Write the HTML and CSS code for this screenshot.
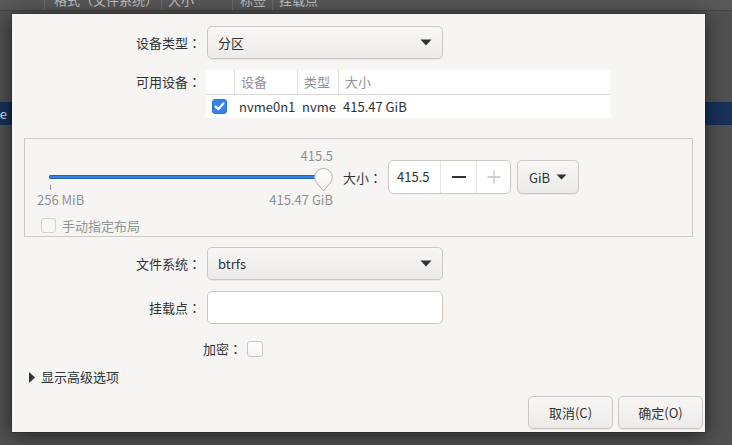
FILE: index.html
```html
<!DOCTYPE html>
<html lang="zh-CN">
<head>
<meta charset="utf-8">
<title>分区</title>
<link rel="stylesheet" href="styles.css">
</head>
<body>
<div class="bg">
  <div class="bg-header">
    <span class="hcol c1"></span>
    <span class="hcol c2">格式（文件系统）</span>
    <span class="hcol c3">大小</span>
    <span class="hcol c4">标签</span>
    <span class="hcol c5">挂载点</span>
  </div>
  <div class="bg-row"><span class="bg-row-text">none</span></div>
</div>

<div class="dialog">
  <div class="form">
    <div class="label">设备类型<span class="colon" lang="zh-TW">：</span></div>
    <div class="combo">
      <span>分区</span>
      <svg class="arrow" width="12" height="7" viewBox="0 0 12 7"><path d="M0.5 0.5 H11.5 L6 6.5 Z" fill="#2e3436"/></svg>
    </div>

    <div class="label label-top">可用设备<span class="colon" lang="zh-TW">：</span></div>
    <div class="devtable">
      <div class="dt-head">
        <div class="dt-c c-chk"></div>
        <div class="dt-c">设备</div>
        <div class="dt-c">类型</div>
        <div class="dt-c">大小</div>
      </div>
      <div class="dt-row">
        <div class="dt-c c-chk">
          <span class="chk-on">
            <svg width="15" height="15" viewBox="0 0 15 15"><path d="M3.6 7.6 L6.3 10.2 L11.4 4.6" fill="none" stroke="#fff" stroke-width="2.2" stroke-linecap="round" stroke-linejoin="round"/></svg>
          </span>
        </div>
        <div class="dt-c">nvme0n1</div>
        <div class="dt-c">nvme</div>
        <div class="dt-c">415.47 GiB</div>
      </div>
    </div>
  </div>

  <div class="frame">
    <div class="frame-top">
      <div class="scale">
        <div class="scale-value">415.5</div>
        <div class="trough">
          <div class="thumb">
            <svg width="19" height="25" viewBox="0 0 19 25">
              <defs>
                <linearGradient id="tg" x1="0" y1="0" x2="0" y2="1">
                  <stop offset="0" stop-color="#ffffff"/>
                  <stop offset="1" stop-color="#f1efed"/>
                </linearGradient>
              </defs>
              <path d="M9.5 24 L3 16.2 A8.8 8.8 0 1 1 16 16.2 Z" fill="url(#tg)" stroke="#b9b2ab" stroke-width="1" stroke-linejoin="round"/>
            </svg>
          </div>
        </div>
        <div class="tick"></div>
        <div class="marks"><span>256 MiB</span><span>415.47 GiB</span></div>
      </div>
      <div class="sizebox">
        <span class="size-label">大小<span class="colon" lang="zh-TW">：</span></span>
        <div class="spin">
          <span class="spin-val">415.5</span>
          <span class="spin-btn">
            <svg width="16" height="16" viewBox="0 0 16 16"><rect x="1" y="7" width="14" height="2" fill="#2e3436"/></svg>
          </span>
          <span class="spin-btn">
            <svg width="16" height="16" viewBox="0 0 16 16"><path d="M8 1.5 V14.5 M1.5 8 H14.5" stroke="#c5c2be" stroke-width="1.3" fill="none"/></svg>
          </span>
        </div>
        <div class="unit-btn">
          <span>GiB</span>
          <svg width="11" height="6" viewBox="0 0 11 6"><path d="M0.5 0.5 H10.5 L5.5 5.5 Z" fill="#2e3436"/></svg>
        </div>
      </div>
    </div>
    <div class="manual">
      <span class="chk-off dis"></span>
      <span>手动指定布局</span>
    </div>
  </div>

  <div class="form form2">
    <div class="label">文件系统<span class="colon" lang="zh-TW">：</span></div>
    <div class="combo">
      <span>btrfs</span>
      <svg class="arrow" width="12" height="7" viewBox="0 0 12 7"><path d="M0.5 0.5 H11.5 L6 6.5 Z" fill="#2e3436"/></svg>
    </div>
    <div class="label">挂载点<span class="colon" lang="zh-TW">：</span></div>
    <div class="entry"></div>
  </div>

  <div class="encrypt">
    <span>加密<span class="colon" lang="zh-TW">：</span></span>
    <span class="chk-off"></span>
  </div>

  <div class="expander">
    <svg width="6" height="11" viewBox="0 0 6 11"><path d="M0 0 L6 5.5 L0 11 Z" fill="#2e3436"/></svg>
    <span>显示高级选项</span>
  </div>

  <div class="actions">
    <button class="btn">取消(C)</button>
    <button class="btn">确定(O)</button>
  </div>
</div>
</body>
</html>
```

FILE: styles.css
```css
* {
  box-sizing: border-box;
}

html, body {
  margin: 0;
  padding: 0;
}

body {
  width: 732px;
  height: 445px;
  overflow: hidden;
  position: relative;
  background: #515151;
  font-family: "Noto Sans CJK SC", "Noto Sans", sans-serif;
  font-size: 13px;
  color: #2e3436;
}

.colon {
  font-family: "Noto Sans CJK TC", "Noto Sans CJK SC", sans-serif;
}

/* background window */
.bg-header {
  height: 11px;
  background: #585858;
  border-bottom: 1px solid #454545;
  display: flex;
  overflow: hidden;
  color: #c2c2c2;
}

.hcol {
  line-height: 16px;
  margin-top: -8px;
  padding-left: 9px;
  border-left: 1px solid #6c6c6c;
  white-space: nowrap;
}

.c1 { width: 44px; border-left: none; }
.c2 { width: 117px; }
.c3 { width: 71px; padding-left: 6px; }
.c4 { width: 40px; padding-left: 7px; }
.c5 { flex: 1; padding-left: 6px; }

.bg-row {
  margin-top: 91px;
  height: 23px;
  background: #173158;
  color: #dfe4ea;
  line-height: 23px;
  overflow: hidden;
}

.bg-row-text {
  display: inline-block;
  margin-left: -24px;
}

/* dialog */
.dialog {
  position: absolute;
  left: 12px;
  top: 14px;
  width: 693px;
  height: 418px;
  background: #f6f5f4;
  box-shadow: 0 3px 20px rgba(0, 0, 0, 0.6), 0 0 0 1px rgba(0, 0, 0, 0.15);
  display: flex;
  flex-direction: column;
  padding-top: 12px;
}

.form {
  display: grid;
  grid-template-columns: 189px auto;
  column-gap: 6px;
  row-gap: 11px;
  justify-content: start;
}

.label {
  text-align: right;
  align-self: center;
  line-height: 16px;
  white-space: nowrap;
}

.label-top {
  align-self: start;
  line-height: 24px;
}

.combo {
  width: 236px;
  height: 33px;
  border: 1px solid #cdc7c2;
  border-radius: 5px;
  background: linear-gradient(#f8f7f6, #edebe9);
  box-shadow: 0 1px rgba(0, 0, 0, 0.05);
  display: flex;
  align-items: center;
  justify-content: space-between;
  padding: 0 10px;
}

.arrow {
  display: block;
}

.entry {
  width: 236px;
  height: 33px;
  border: 1px solid #cdc7c2;
  border-radius: 5px;
  background: #ffffff;
}

/* device table */
.devtable {
  width: 404px;
  margin-left: -1px;
  background: #ffffff;
}

.dt-head,
.dt-row {
  display: grid;
  grid-template-columns: 28px 63px 41px 1fr;
}

.dt-head {
  height: 25px;
  border-bottom: 1px solid #dcd7d2;
  color: #8f9293;
}

.dt-head .dt-c {
  line-height: 24px;
  padding-left: 6px;
  border-left: 1px solid #e3dfdb;
}

.dt-head .c-chk {
  border-left: none;
}

.dt-row {
  height: 23px;
}

.dt-row .dt-c {
  line-height: 23px;
  padding-left: 5px;
  white-space: nowrap;
}

.dt-row .c-chk {
  padding-left: 6px;
  display: flex;
  align-items: center;
}

.chk-on {
  width: 15px;
  height: 15px;
  border-radius: 3px;
  background: #3584e4;
  border: 1px solid #2a76d4;
  display: flex;
  align-items: center;
  justify-content: center;
  margin-top: -1px;
}

.chk-on svg {
  display: block;
  margin: -1px;
}

.chk-off {
  display: inline-block;
  width: 16px;
  height: 16px;
  border: 1px solid #cdc7c2;
  border-radius: 3px;
  background: linear-gradient(#ffffff, #f6f5f4);
}

.chk-off.dis {
  width: 15px;
  height: 15px;
  border-color: #d6d1cc;
  background: #f8f7f6;
}

/* size frame */
.frame {
  margin-top: 20px;
  margin-left: 12px;
  width: 669px;
  height: 99px;
  border: 1px solid #cfc9c4;
  padding: 9px 0 0 12px;
}

.frame-top {
  display: flex;
  align-items: flex-start;
}

.scale {
  width: 296px;
  display: flex;
  flex-direction: column;
}

.scale-value {
  line-height: 16px;
  text-align: right;
  color: #8f9293;
}

.trough {
  position: relative;
  margin-top: 11px;
  margin-left: 12px;
  width: 274px;
  height: 4px;
  border-radius: 2px;
  background: #3584e4;
  box-shadow: inset 0 0 0 1px #1d64bc;
}

.thumb {
  position: absolute;
  left: 265px;
  top: -8px;
  width: 19px;
  height: 25px;
}

.thumb svg {
  display: block;
}

.tick {
  margin-top: 6px;
  margin-left: 13px;
  width: 1px;
  height: 5px;
  background: #8f9293;
}

.marks {
  margin-top: 2px;
  display: flex;
  justify-content: space-between;
  line-height: 16px;
  color: #8f9293;
}

.sizebox {
  margin-top: 12px;
  margin-left: 10px;
  display: flex;
  align-items: center;
}

.size-label {
  width: 39px;
  white-space: nowrap;
}

.spin {
  margin-left: 6px;
  width: 123px;
  height: 34px;
  border: 1px solid #cdc7c2;
  border-radius: 5px;
  background: #ffffff;
  display: flex;
}

.spin-val {
  flex: 0 0 51px;
  padding-left: 8px;
  line-height: 32px;
}

.spin-btn {
  flex: 0 0 36px;
  border-left: 1px solid #e6e2de;
  display: flex;
  align-items: center;
  justify-content: center;
}

.spin-btn + .spin-btn {
  flex: 1;
}

.spin-btn svg {
  display: block;
}

.unit-btn {
  margin-left: 6px;
  width: 62px;
  height: 34px;
  border: 1px solid #cdc7c2;
  border-radius: 5px;
  background: linear-gradient(#f8f7f6, #edebe9);
  box-shadow: 0 1px rgba(0, 0, 0, 0.05);
  display: flex;
  align-items: center;
  justify-content: center;
  gap: 6px;
}

.unit-btn svg {
  display: block;
}

.manual {
  margin-top: 10px;
  margin-left: 4px;
  display: flex;
  align-items: center;
  gap: 6px;
  height: 15px;
  color: #929595;
}

/* lower form */
.form2 {
  margin-top: 10px;
}

.encrypt {
  margin-top: 17px;
  padding-left: 191px;
  display: flex;
  align-items: center;
  gap: 5px;
  height: 16px;
  line-height: 16px;
}

.expander {
  margin-top: 12px;
  padding-left: 17px;
  display: flex;
  align-items: center;
  gap: 6px;
  line-height: 16px;
}

.expander svg {
  display: block;
}

.actions {
  margin-top: auto;
  display: flex;
  justify-content: flex-end;
  gap: 5px;
  padding: 0 2px 3px 0;
}

.btn {
  width: 85px;
  height: 33px;
  border: 1px solid #cdc7c2;
  border-radius: 5px;
  background: linear-gradient(#f8f7f6, #edebe9);
  box-shadow: 0 1px rgba(0, 0, 0, 0.05);
  font-family: inherit;
  font-size: 13px;
  color: #2e3436;
  padding: 0;
}
```
